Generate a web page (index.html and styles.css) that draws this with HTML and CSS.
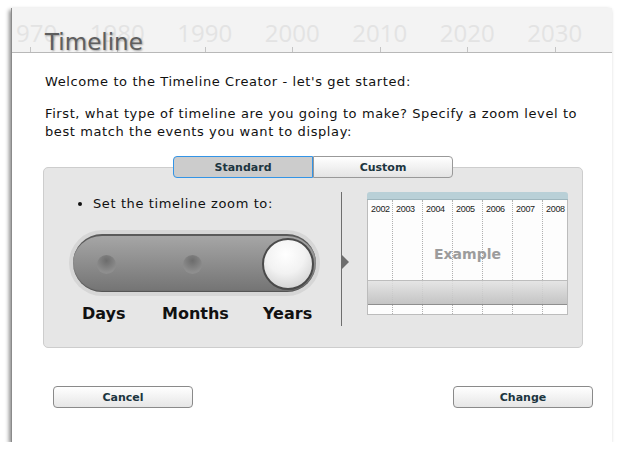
FILE: index.html
```html
<!DOCTYPE html>
<html>
<head>
<meta charset="utf-8">
<link rel="stylesheet" href="styles.css">
</head>
<body>
<div class="dialog">
  <div class="header">
    <div class="years">
      <span class="year">1970</span>
      <span class="year">1980</span>
      <span class="year">1990</span>
      <span class="year">2000</span>
      <span class="year">2010</span>
      <span class="year">2020</span>
      <span class="year">2030</span>
    </div>
    <h1 class="title">Timeline</h1>
  </div>
  <div class="content">
    <p class="intro">Welcome to the Timeline Creator - let's get started:</p>
    <p class="question">First, what type of timeline are you going to make? Specify a zoom level to best match the events you want to display:</p>
    <div class="tabs">
      <div class="tab active">Standard</div>
      <div class="tab">Custom</div>
    </div>
    <div class="box">
      <div class="left">
        <ul class="bullets"><li>Set the timeline zoom to:</li></ul>
        <div class="slider">
          <div class="track">
            <span class="dot"></span>
            <span class="dot"></span>
            <span class="knob"></span>
          </div>
        </div>
        <div class="labels">
          <span>Days</span><span>Months</span><span>Years</span>
        </div>
      </div>
      <div class="divider"><span class="arrow"></span></div>
      <div class="preview">
        <div class="pv-top"></div>
        <div class="pv-body">
          <div class="pv-cols">
            <div class="col">2002</div>
            <div class="col">2003</div>
            <div class="col">2004</div>
            <div class="col">2005</div>
            <div class="col">2006</div>
            <div class="col">2007</div>
            <div class="col">2008</div>
          </div>
          <div class="pv-label">Example</div>
          <div class="pv-band"></div>
        </div>
      </div>
    </div>
    <div class="buttons">
      <button class="btn">Cancel</button>
      <button class="btn">Change</button>
    </div>
  </div>
</div>
</body>
</html>
```
FILE: styles.css
```css
html, body {
  margin: 0;
  padding: 0;
  background: #fff;
}
body {
  font-family: "DejaVu Sans", Verdana, sans-serif;
  color: #111;
}
.dialog {
  margin: 8px 0 0 11px;
  width: 601px;
  height: 434px;
  background: #fff;
  border-left: 1px solid #8a8a8a;
  box-shadow: -2px 2px 4px rgba(0,0,0,0.45);
  box-sizing: border-box;
  position: relative;
  overflow: hidden;
}
.header {
  height: 44px;
  background: #f3f3f3;
  border-bottom: 1px solid #b8b8b8;
  position: relative;
  overflow: hidden;
}
.years {
  display: flex;
  margin-left: -26px;
  padding-top: 11px;
}
.year {
  flex: 0 0 87.5px;
  text-align: center;
  font-family: "Open Sans", sans-serif;
  font-size: 24px;
  line-height: 28px;
  color: #e3e3e3;
  position: relative;
  height: 33px;
}
.year::after {
  content: "";
  position: absolute;
  left: 50%;
  bottom: 0;
  width: 1px;
  height: 5px;
  background: #c4c4c4;
}
.title {
  position: absolute;
  left: 33px;
  top: 20px;
  margin: 0;
  font-family: "DejaVu Sans", sans-serif;
  font-weight: normal;
  font-size: 23px;
  line-height: 28px;
  color: #5e5e5e;
  text-shadow: 1px 1px 2px rgba(0,0,0,0.35);
}
.content {
  padding: 0 0 0 33px;
}
.intro {
  margin: 20px 0 0 0;
  font-size: 13px;
  line-height: 18px;
  letter-spacing: 0.6px;
}
.question {
  margin: 14px 0 0 0;
  font-size: 13px;
  line-height: 18px;
  letter-spacing: 0.6px;
  width: 545px;
}
.tabs {
  display: flex;
  margin: 15px 0 -11px 128px;
  position: relative;
  z-index: 1;
}
.tab {
  width: 140px;
  height: 22px;
  box-sizing: border-box;
  font-size: 11px;
  font-weight: bold;
  color: #1c3540;
  display: flex;
  align-items: center;
  justify-content: center;
  border: 1px solid #999;
  background: linear-gradient(#ffffff, #e4e4e4);
  border-radius: 0 4px 4px 0;
}
.tab.active {
  background: #cccccc;
  border: 1px solid #3394e6;
  border-radius: 4px 0 0 4px;
}
.box {
  width: 540px;
  height: 181px;
  box-sizing: border-box;
  margin-left: -2px;
  background: #e6e6e6;
  border: 1px solid #cdcdcd;
  border-radius: 5px;
  display: flex;
  align-items: flex-start;
}
.left {
  width: 297px;
  padding-top: 27px;
}
.bullets {
  margin: 0;
  padding: 0 0 0 49px;
  font-size: 13px;
  line-height: 18px;
  letter-spacing: 0.6px;
}
.slider {
  margin: 17px 0 0 25px;
  width: 251px;
  height: 66px;
  box-sizing: border-box;
  border-radius: 33px;
  background: #d6d6d6;
  padding: 4px;
}
.track {
  height: 58px;
  border-radius: 29px;
  box-sizing: border-box;
  border-top: 2px solid #5a5a5a;
  background: linear-gradient(#a6a6a6, #8a8a8a 55%, #737373);
  box-shadow: inset 0 -1px 1px rgba(0,0,0,0.3);
  display: flex;
  align-items: center;
  padding-left: 24px;
  position: relative;
}
.dot {
  width: 19px;
  height: 19px;
  border-radius: 50%;
  background: radial-gradient(circle at 50% 30%, #6c6c6c, #8e8e8e 70%);
  margin-right: 67px;
}
.knob {
  position: absolute;
  right: 2px;
  top: 2px;
  width: 52px;
  height: 52px;
  box-sizing: border-box;
  border-radius: 50%;
  border: 2px solid #4a4a4a;
  background: radial-gradient(circle at 45% 30%, #ffffff, #f2f2f2 45%, #c9c9c9 95%);
}
.labels {
  display: flex;
  margin: 8px 0 0 38px;
  font-size: 16px;
  font-weight: bold;
  line-height: 20px;
}
.labels span:nth-child(1) { width: 80px; }
.labels span:nth-child(2) { width: 101px; }
.divider {
  width: 1px;
  height: 134px;
  margin-top: 24px;
  background: #6e6e6e;
  position: relative;
}
.arrow {
  position: absolute;
  left: 1px;
  top: 63px;
  width: 0;
  height: 0;
  border-top: 7px solid transparent;
  border-bottom: 7px solid transparent;
  border-left: 7px solid #6e6e6e;
}
.preview {
  margin: 24px 0 0 25px;
  width: 201px;
}
.pv-top {
  height: 7px;
  background: #b9d0d7;
  border-radius: 3px 3px 0 0;
  border-bottom: 1px solid #9fb6bd;
}
.pv-body {
  height: 115px;
  background: #fdfdfd;
  border: 1px solid #bcbcbc;
  border-top: none;
  position: relative;
  box-sizing: border-box;
}
.pv-cols {
  display: flex;
  height: 100%;
}
.col {
  width: 30px;
  font-family: "Liberation Sans", Arial, sans-serif;
  font-size: 9px;
  line-height: 14px;
  padding: 2px 0 0 3px;
  box-sizing: border-box;
  color: #222;
  border-right: 1px dotted #b0b0b0;
  letter-spacing: -0.3px;
}
.col:first-child { width: 25px; }
.col:last-child { border-right: none; flex: 1; }
.pv-label {
  position: absolute;
  left: 0;
  right: 0;
  top: 46px;
  text-align: center;
  font-size: 14px;
  font-weight: bold;
  color: #9c9c9c;
}
.pv-band {
  position: absolute;
  left: 0;
  right: 0;
  top: 80px;
  height: 25px;
  box-sizing: border-box;
  border-top: 1px solid #bdbdbd;
  border-bottom: 1px solid #8e8e8e;
  background: linear-gradient(rgba(225,225,225,0.85), rgba(190,190,190,0.9));
}
.buttons {
  display: flex;
  justify-content: space-between;
  width: 540px;
  margin: 38px 0 0 8px;
}
.btn {
  width: 140px;
  height: 22px;
  border: 1px solid #8a8a8a;
  border-radius: 4px;
  background: linear-gradient(#ffffff, #e6e6e6);
  font-family: "DejaVu Sans", sans-serif;
  font-size: 11px;
  font-weight: bold;
  color: #1c3540;
  padding: 0;
}
```
